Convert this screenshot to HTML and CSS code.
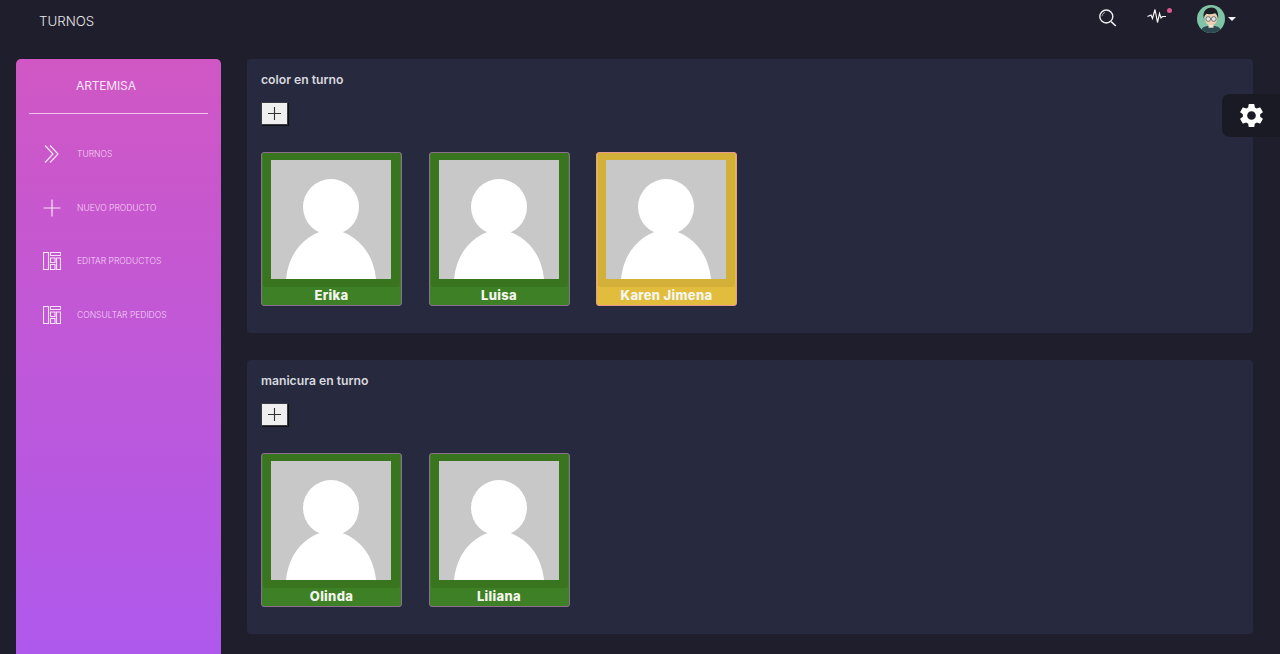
FILE: index.html
```html
<!DOCTYPE html>
<html lang="es">
<head>
<meta charset="utf-8">
<title>Turnos</title>
<link rel="stylesheet" href="styles.css">
</head>
<body>
<header class="topbar">
  <div class="brand">TURNOS</div>
  <div class="top-icons">
    <svg class="ico-search" width="18" height="18" viewBox="0 0 18 18" fill="none" stroke="#eeeef2"><circle cx="7.300" cy="7.500" r="6.500" stroke-width="1.400"/><path d="M3 7.200a4.200 4.200 0 0 1 3.200-3.800" stroke-width=".6"/><path d="M12.200 12.600l4.600 4.400" stroke-width="1.500"/></svg>
    <span class="pulse">
      <svg width="20" height="16" viewBox="0 0 20 16" fill="none" stroke="#f4f4f6" stroke-width="1.200"><path d="M0.500 8.500l3.500-1.500 1.500 3.500 2.500-9 2.500 13 2-9 1.500 4.500 1.500-1.500h3.500"/></svg>
      <i class="dot"></i>
    </span>
    <span class="user">
      <svg width="28" height="28" viewBox="0 0 27 27"><defs><clipPath id="av"><circle cx="13.500" cy="13.500" r="13.500"/></clipPath></defs><g clip-path="url(#av)"><rect width="27" height="27" fill="#7fc4a7"/><path d="M3 27c1-6 5-7 10.500-7s9.500 1 10.500 7z" fill="#2c4a52"/><rect x="11" y="17" width="5" height="5" fill="#e8c9a8"/><ellipse cx="13.500" cy="13" rx="6" ry="6.800" fill="#eccfb0"/><path d="M6.500 13c-1.500-8 4-10.500 7.500-10.500s7 2.500 6.500 10.500c-1-3-2-4.500-3-5-3 1-7 1-8.500.5-1 1-2 2-2.500 4.500z" fill="#1c2024"/><circle cx="10.800" cy="13.500" r="2.300" fill="#dfe6e6" stroke="#4b4f55" stroke-width=".7"/><circle cx="16.200" cy="13.500" r="2.300" fill="#dfe6e6" stroke="#4b4f55" stroke-width=".7"/><path d="M11 19.500h5l-2.500 2z" fill="#f4f4f4"/></g></svg>
      <i class="caret"></i>
    </span>
  </div>
</header>

<div class="layout">
  <aside class="sidebar">
    <div class="side-title">ARTEMISA</div>
    <nav class="side-nav">
      <a class="nav-item">
        <svg class="nav-ico" width="18" height="18" viewBox="0 0 18 18" fill="none" stroke="#f8e2f8" stroke-width="1.200"><path d="M2 .5l8 8.500-8 8.500M7 .5l8 8.500-8 8.500"/></svg>
        <span>TURNOS</span>
      </a>
      <a class="nav-item">
        <svg class="nav-ico" width="18" height="18" viewBox="0 0 18 18" fill="none" stroke="#f8e2f8" stroke-width="1.200"><path d="M9 .5v17M.5 9h17"/></svg>
        <span>NUEVO PRODUCTO</span>
      </a>
      <a class="nav-item">
        <svg class="nav-ico" width="18" height="18" viewBox="0 0 18 18" fill="none" stroke="#f8e2f8" stroke-width="1.100"><path d="M.5.500h5v17h-5zM7.500.500h10v3h-10zM7.500 6h4.500v4.500H7.500zM7.500 12.500h4.500v5H7.500zM13.500 6h4v11.500h-4z"/></svg>
        <span>EDITAR PRODUCTOS</span>
      </a>
      <a class="nav-item">
        <svg class="nav-ico" width="18" height="18" viewBox="0 0 18 18" fill="none" stroke="#f8e2f8" stroke-width="1.100"><path d="M.5.500h5v17h-5zM7.500.500h10v3h-10zM7.500 6h4.500v4.500H7.500zM7.500 12.500h4.500v5H7.500zM13.500 6h4v11.500h-4z"/></svg>
        <span>CONSULTAR PEDIDOS</span>
      </a>
    </nav>
  </aside>

  <main class="content">
    <section class="panel">
      <h2 class="panel-title">color en turno</h2>
      <button class="add-btn" type="button"><svg width="13" height="13" viewBox="0 0 13 13" stroke="#333" stroke-width="1.100"><path d="M6.500 0v13M0 6.500h13"/></svg></button>
      <div class="cards">
        <article class="card">
          <div class="frame"><svg class="photo" viewBox="0 0 120 119"><rect width="120" height="119" fill="#c8c8c8"/><circle cx="60" cy="47" r="28" fill="#fff"/><path d="M15 119c3-28 20-46 45-50 25 4 42 22 45 50z" fill="#fff"/></svg></div>
          <div class="name">Erika</div>
        </article>
        <article class="card">
          <div class="frame"><svg class="photo" viewBox="0 0 120 119"><rect width="120" height="119" fill="#c8c8c8"/><circle cx="60" cy="47" r="28" fill="#fff"/><path d="M15 119c3-28 20-46 45-50 25 4 42 22 45 50z" fill="#fff"/></svg></div>
          <div class="name">Luisa</div>
        </article>
        <article class="card card-busy">
          <div class="frame"><svg class="photo" viewBox="0 0 120 119"><rect width="120" height="119" fill="#c8c8c8"/><circle cx="60" cy="47" r="28" fill="#fff"/><path d="M15 119c3-28 20-46 45-50 25 4 42 22 45 50z" fill="#fff"/></svg></div>
          <div class="name">Karen Jimena</div>
        </article>
      </div>
    </section>

    <section class="panel">
      <h2 class="panel-title">manicura en turno</h2>
      <button class="add-btn" type="button"><svg width="13" height="13" viewBox="0 0 13 13" stroke="#333" stroke-width="1.100"><path d="M6.500 0v13M0 6.500h13"/></svg></button>
      <div class="cards">
        <article class="card">
          <div class="frame"><svg class="photo" viewBox="0 0 120 119"><rect width="120" height="119" fill="#c8c8c8"/><circle cx="60" cy="47" r="28" fill="#fff"/><path d="M15 119c3-28 20-46 45-50 25 4 42 22 45 50z" fill="#fff"/></svg></div>
          <div class="name">Olinda</div>
        </article>
        <article class="card">
          <div class="frame"><svg class="photo" viewBox="0 0 120 119"><rect width="120" height="119" fill="#c8c8c8"/><circle cx="60" cy="47" r="28" fill="#fff"/><path d="M15 119c3-28 20-46 45-50 25 4 42 22 45 50z" fill="#fff"/></svg></div>
          <div class="name">Liliana</div>
        </article>
      </div>
    </section>
  </main>
</div>

<div class="settings">
  <svg width="29" height="29" viewBox="0 0 24 24"><path fill="#fff" d="M19.140 12.940c.04-.3.06-.61.06-.94 0-.32-.02-.64-.07-.94l2.030-1.580c.18-.14.23-.41.12-.61l-1.920-3.320c-.12-.22-.37-.29-.59-.22l-2.390.96c-.5-.38-1.030-.7-1.620-.94l-.36-2.540c-.04-.24-.24-.41-.48-.41h-3.840c-.24 0-.43.17-.47.41l-.36 2.540c-.59.24-1.130.57-1.620.94l-2.390-.96c-.22-.08-.47 0-.59.22L2.740 8.870c-.12.21-.08.47.12.61l2.030 1.580c-.05.3-.09.63-.09.94s.02.64.07.94l-2.030 1.580c-.18.14-.23.41-.12.61l1.920 3.320c.12.22.37.29.59.22l2.390-.96c.5.38 1.030.7 1.620.94l.36 2.540c.05.24.24.41.48.41h3.840c.24 0 .44-.17.47-.41l.36-2.540c.59-.24 1.130-.56 1.620-.94l2.390.96c.22.08.47 0 .59-.22l1.920-3.320c.12-.22.07-.47-.12-.61l-2.010-1.580zM12 15.600c-1.980 0-3.600-1.620-3.600-3.600s1.620-3.600 3.600-3.600 3.600 1.620 3.600 3.600-1.620 3.600-3.600 3.600z"/></svg>
</div>
</body>
</html>
```

FILE: styles.css
```css
* { box-sizing: border-box; }

html, body { height: 100%; }

body {
  margin: 0;
  height: 654px;
  overflow: hidden;
  background: #1e1e2c;
  color: #fff;
  font-family: "Inter", "Liberation Sans", sans-serif;
  position: relative;
}

.topbar {
  height: 43px;
  display: flex;
  justify-content: space-between;
  padding: 0 44px 0 39px;
}

.brand {
  font-size: 13.300px;
  line-height: 43px;
  font-weight: 300;
  color: #e6e6ea;
}

.top-icons {
  display: flex;
  align-items: flex-start;
}

.ico-search {
  margin-top: 9px;
  margin-right: 30px;
}

.pulse {
  position: relative;
  display: flex;
  margin-top: 8px;
  margin-right: 30px;
}

.dot {
  position: absolute;
  top: 0;
  left: 20px;
  width: 5px;
  height: 5px;
  border-radius: 50%;
  background: #e0578f;
}

.user {
  display: flex;
  align-items: center;
  gap: 3px;
  margin-top: 5px;
}

.caret {
  width: 0;
  height: 0;
  border-left: 4px solid transparent;
  border-right: 4px solid transparent;
  border-top: 4px solid #f2f2f5;
}

.layout {
  display: flex;
  margin-top: 16px;
  padding-left: 16px;
  gap: 26px;
}

.sidebar {
  width: 205px;
  height: 620px;
  flex: none;
  border-radius: 5px 5px 0 0;
  background: linear-gradient(180deg, #d057c4 0%, #ad59ee 100%);
  padding: 0 13px;
}

.side-title {
  height: 55px;
  padding: 19px 0 0 47px;
  font-size: 12px;
  line-height: 16px;
  letter-spacing: -.15px;
  color: #fbe6fa;
  border-bottom: 1px solid #f0c3ee;
}

.side-nav {
  display: flex;
  flex-direction: column;
  gap: 35.500px;
  padding-top: 31px;
}

.nav-item {
  display: flex;
  align-items: center;
  gap: 16px;
  height: 18px;
  padding-left: 14px;
  font-size: 8.500px;
  font-weight: 300;
  color: #f3d3f3;
}

.nav-ico { flex: none; }

.content {
  width: 1006px;
  flex: none;
  display: flex;
  flex-direction: column;
  gap: 27px;
}

.panel {
  height: 274px;
  background: #272a3e;
  border-radius: 4px;
  padding: 13px 14px;
}

.panel-title {
  margin: 0;
  font-size: 12.200px;
  line-height: 16px;
  font-weight: 600;
  color: #d9d9de;
}

.add-btn {
  display: flex;
  align-items: center;
  justify-content: center;
  width: 25px;
  height: 21px;
  margin-top: 15px;
  margin-left: 1px;
  padding: 0;
  background: #efefef;
  border: 0;
  box-shadow: 0 0 0 1px #3a3a44, 1px 1px 0 1px #111;
}

.cards {
  display: flex;
  gap: 26.500px;
  margin-top: 28px;
}

.card {
  width: 141px;
  height: 154px;
  display: flex;
  flex-direction: column;
  border: 1px solid #8d7090;
  border-radius: 3px;
  background: #3e8025;
}

.frame {
  height: 134px;
  padding: 7px 8px 0;
  background: #39741f;
  border-radius: 0 0 3px 3px;
  margin: 0 1px;
}

.photo {
  display: block;
  width: 120px;
  height: 119px;
}

.name {
  flex: 1;
  text-align: center;
  font-size: 13px;
  line-height: 17px;
  font-weight: 800;
  letter-spacing: .3px;
  color: #f4f6ee;
}

.card-busy {
  border-color: #e89a8e;
  background: #e2bd3d;
}

.card-busy .frame { background: #d3b038; }

.settings {
  position: absolute;
  top: 94px;
  right: 0;
  width: 58px;
  height: 43px;
  border-radius: 8px 0 0 8px;
  background: #191a24;
  display: flex;
  align-items: center;
  justify-content: center;
}
```
